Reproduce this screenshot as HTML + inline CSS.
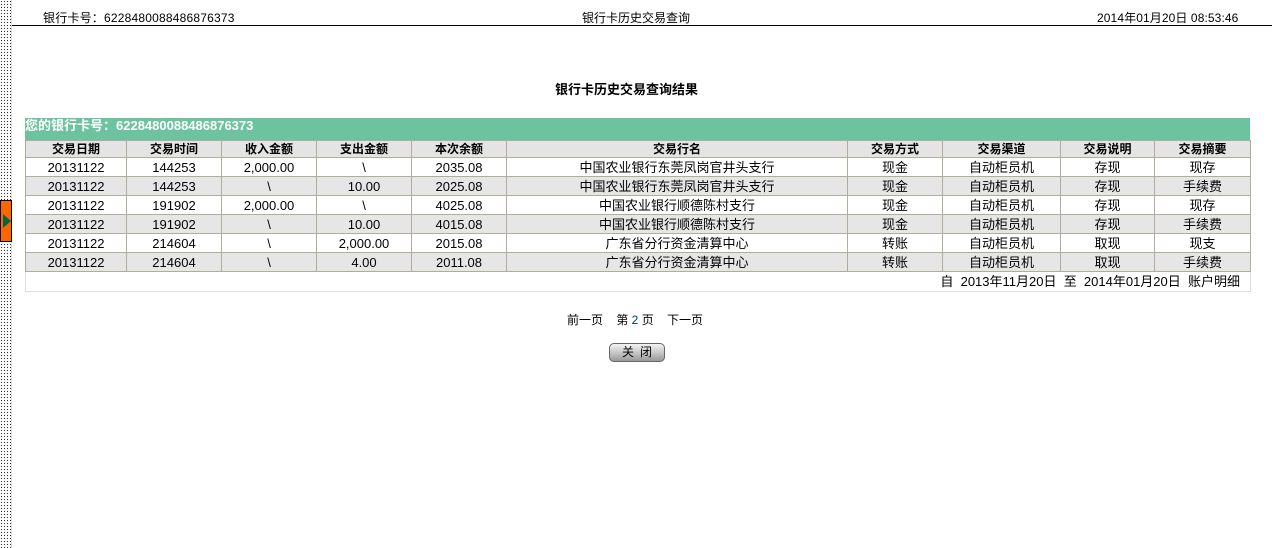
<!DOCTYPE html>
<html><head><meta charset="utf-8"><style>
*{margin:0;padding:0;box-sizing:border-box}
body{width:1280px;height:548px;background:#fff;position:relative;overflow:hidden;font-family:"Liberation Sans","Noto Sans CJK SC",sans-serif;font-size:12px;color:#000}
.dots{position:absolute;left:0;top:0;width:12px;height:548px;background-image:radial-gradient(circle,#333 0.7px,transparent 0.8px);background-size:3px 3px;border-right:1px solid #ddd}
.btn{position:absolute;left:0;top:200px;width:12px;height:42px;background:#f60;border:1px solid #000}
.btn:after{content:"";position:absolute;left:2px;top:13px;border-left:8px solid #064;border-top:7px solid transparent;border-bottom:7px solid transparent}
.a{position:absolute;white-space:nowrap}
.line{position:absolute;left:12px;top:25px;width:1260px;height:1px;background:#000}
table{position:absolute;left:25px;top:140px;width:1225px;border-collapse:collapse;table-layout:fixed}
td,th{border:1px solid #b0aca0;text-align:center;height:19px;font-size:13px;padding:0;line-height:17px}
th{background:#e4e4e4;height:17px;line-height:15px;font-weight:bold;font-size:12px}
tr.g td{background:#e6e6e6}
.foot td{border:1px solid #ddd;height:20px;text-align:right;padding-right:10px;border-top:1px solid #b0aca0}
.close{position:absolute;left:609px;top:343px;width:56px;height:19px;border:1px solid #666;border-radius:5px;background:linear-gradient(#f4f4f4,#c8c8c8 50%,#999);font-size:12px;text-align:center;line-height:17px;letter-spacing:6px;padding-left:6px}
</style></head><body>
<div class="dots"></div><div class="btn"></div>
<div class="a" style="left:43px;top:9px;letter-spacing:0.2px">银行卡号：6228480088486876373</div>
<div class="a" style="left:582px;top:9px">银行卡历史交易查询</div>
<div class="a" style="left:1097px;top:9px;letter-spacing:0.1px">2014年01月20日 08:53:46</div>
<div class="line"></div>
<div class="a" style="left:555px;top:79px;font-size:13px;font-weight:bold">银行卡历史交易查询结果</div>
<div class="a" style="left:25px;top:118px;width:1225px;height:22px;background:#6dc3a0;color:#fff;font-weight:bold;font-size:13px;line-height:16px">您的银行卡号：6228480088486876373</div>
<table>
<colgroup><col style="width:101px"><col style="width:95px"><col style="width:95px"><col style="width:95px"><col style="width:95px"><col style="width:341px"><col style="width:95px"><col style="width:118px"><col style="width:94px"><col style="width:96px"></colgroup>
<tr><th>交易日期</th><th>交易时间</th><th>收入金额</th><th>支出金额</th><th>本次余额</th><th>交易行名</th><th>交易方式</th><th>交易渠道</th><th>交易说明</th><th>交易摘要</th></tr>
<tr><td>20131122</td><td>144253</td><td>2,000.00</td><td>\</td><td>2035.08</td><td>中国农业银行东莞凤岗官井头支行</td><td>现金</td><td>自动柜员机</td><td>存现</td><td>现存</td></tr>
<tr class="g"><td>20131122</td><td>144253</td><td>\</td><td>10.00</td><td>2025.08</td><td>中国农业银行东莞凤岗官井头支行</td><td>现金</td><td>自动柜员机</td><td>存现</td><td>手续费</td></tr>
<tr><td>20131122</td><td>191902</td><td>2,000.00</td><td>\</td><td>4025.08</td><td>中国农业银行顺德陈村支行</td><td>现金</td><td>自动柜员机</td><td>存现</td><td>现存</td></tr>
<tr class="g"><td>20131122</td><td>191902</td><td>\</td><td>10.00</td><td>4015.08</td><td>中国农业银行顺德陈村支行</td><td>现金</td><td>自动柜员机</td><td>存现</td><td>手续费</td></tr>
<tr><td>20131122</td><td>214604</td><td>\</td><td>2,000.00</td><td>2015.08</td><td>广东省分行资金清算中心</td><td>转账</td><td>自动柜员机</td><td>取现</td><td>现支</td></tr>
<tr class="g"><td>20131122</td><td>214604</td><td>\</td><td>4.00</td><td>2011.08</td><td>广东省分行资金清算中心</td><td>转账</td><td>自动柜员机</td><td>取现</td><td>手续费</td></tr>
<tr class="foot"><td colspan="10">自 &nbsp;2013年11月20日 &nbsp;至 &nbsp;2014年01月20日 &nbsp;账户明细</td></tr>
</table>
<div class="a" style="left:567px;top:311px">前一页 &nbsp;&nbsp;&nbsp;第 <span style="color:#039">2</span> 页 &nbsp;&nbsp;&nbsp;下一页</div>
<div class="close">关闭</div>
</body></html>
